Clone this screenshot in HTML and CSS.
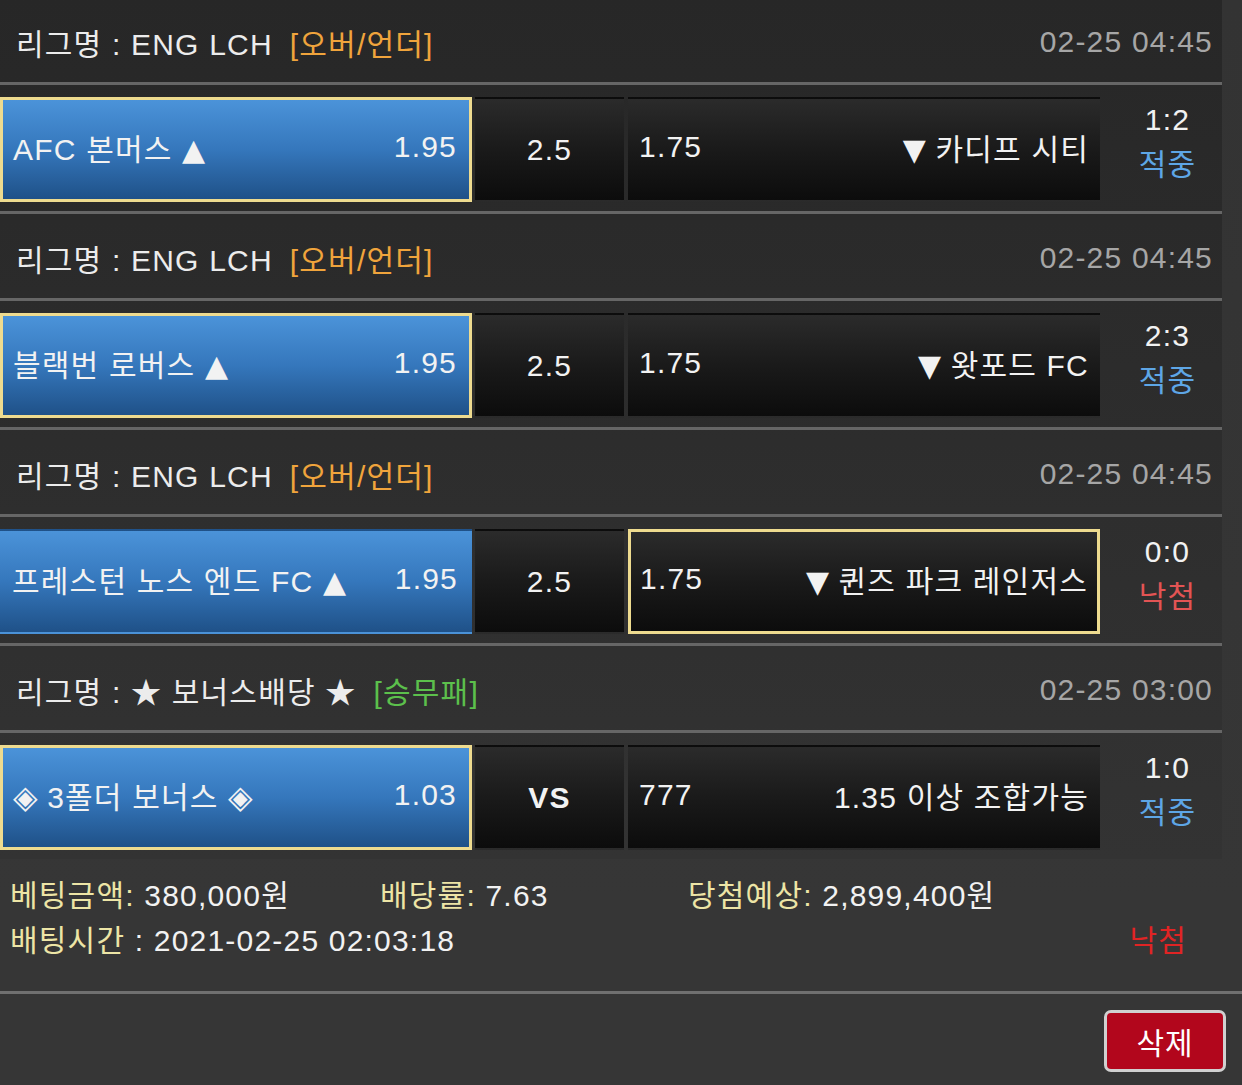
FILE: index.html
```html
<!DOCTYPE html>
<html lang="ko">
<head>
<meta charset="utf-8">
<link rel="stylesheet" href="styles.css">
</head>
<body>
<div class="page">
  <div class="list">
    <div class="block">
      <div class="league"><span class="lname">리그명 : ENG LCH</span><span class="type ou">[오버/언더]</span><span class="date">02-25 04:45</span></div>
      <div class="match">
        <div class="cell home sel"><span>AFC 본머스 <span class="tri">▲</span></span><span>1.95</span></div>
        <div class="cell mid">2.5</div>
        <div class="cell away"><span>1.75</span><span><span class="tri">▼</span> 카디프 시티</span></div>
        <div class="result"><span>1:2</span><span class="hit">적중</span></div>
      </div>
    </div>
    <div class="block">
      <div class="league"><span class="lname">리그명 : ENG LCH</span><span class="type ou">[오버/언더]</span><span class="date">02-25 04:45</span></div>
      <div class="match">
        <div class="cell home sel"><span>블랙번 로버스 <span class="tri">▲</span></span><span>1.95</span></div>
        <div class="cell mid">2.5</div>
        <div class="cell away"><span>1.75</span><span><span class="tri">▼</span> 왓포드 FC</span></div>
        <div class="result"><span>2:3</span><span class="hit">적중</span></div>
      </div>
    </div>
    <div class="block">
      <div class="league"><span class="lname">리그명 : ENG LCH</span><span class="type ou">[오버/언더]</span><span class="date">02-25 04:45</span></div>
      <div class="match">
        <div class="cell home"><span>프레스턴 노스 엔드 FC <span class="tri">▲</span></span><span>1.95</span></div>
        <div class="cell mid">2.5</div>
        <div class="cell away sel"><span>1.75</span><span><span class="tri">▼</span> 퀸즈 파크 레인저스</span></div>
        <div class="result"><span>0:0</span><span class="miss">낙첨</span></div>
      </div>
    </div>
    <div class="block last">
      <div class="league"><span class="lname">리그명 : ★ 보너스배당 ★</span><span class="type wdl">[승무패]</span><span class="date">02-25 03:00</span></div>
      <div class="match">
        <div class="cell home sel"><span><span class="dia">◈</span> 3폴더 보너스 <span class="dia">◈</span></span><span>1.03</span></div>
        <div class="cell mid vs">VS</div>
        <div class="cell away"><span>777</span><span>1.35 이상 조합가능</span></div>
        <div class="result"><span>1:0</span><span class="hit">적중</span></div>
      </div>
    </div>
  </div>
  <div class="summary">
    <div class="sumrow">
      <span class="c1"><span class="lbl">베팅금액:</span> 380,000원</span>
      <span class="c2"><span class="lbl">배당률:</span> 7.63</span>
      <span class="c3"><span class="lbl">당첨예상:</span> 2,899,400원</span>
    </div>
    <div class="sumrow">
      <span><span class="lbl">배팅시간</span> : 2021-02-25 02:03:18</span>
      <span class="status">낙첨</span>
    </div>
  </div>
  <div class="actions">
    <button class="del">삭제</button>
  </div>
</div>
</body>
</html>
```
FILE: styles.css
```css
html, body {
  margin: 0;
  padding: 0;
}
body {
  background: #363636;
  font-family: "Liberation Sans", "Noto Sans CJK KR", sans-serif;
  font-size: 30px;
  letter-spacing: 1.2px;
  color: #f2f2f2;
  width: 1242px;
  height: 1085px;
  overflow: hidden;
}
.page {
  display: flex;
  flex-direction: column;
  background: linear-gradient(#333 0px, #363636 900px);
}
.list {
  width: 1222px;
  margin-top: -2px;
  background: linear-gradient(#272727 0%, #2e2e2e 60%, #333 100%);
}
.block {
  border-bottom: 3px solid #666;
}
.block.last {
  border-bottom: none;
}
.league {
  height: 87px;
  box-sizing: border-box;
  padding: 3px 9px 0 16px;
  display: flex;
  align-items: center;
  border-bottom: 3px solid #666;
}
.lname {
  color: #ececec;
}
.type {
  margin-left: 17px;
}
.type.ou { color: #f0a43c; }
.type.wdl { color: #5cc04c; }
.date {
  margin-left: auto;
  color: #a6a6a6;
}
.match {
  display: flex;
  gap: 3px;
  padding: 12px 0 9px 0;
  height: 105px;
}
.cell {
  box-sizing: border-box;
  height: 105px;
  display: flex;
  align-items: center;
  background: linear-gradient(#2b2b2b, #1a1a1a 50%, #0c0c0c);
  border: 2px solid transparent;
}
.home {
  width: 472px;
  justify-content: space-between;
  padding: 0 12px 5px 10px;
  background: linear-gradient(#4b93d9, #3577bc 50%, #1f5188);
}
.mid {
  width: 149px;
  justify-content: center;
  padding-top: 1px;
}
.vs {
  font-weight: bold;
}
.away {
  width: 472px;
  justify-content: space-between;
  padding: 0 9px 5px 9px;
  margin-left: 1px;
}
.cell.sel {
  border: 3px solid #eedb8f;
}
.tri {
  font-family: "DejaVu Sans", sans-serif;
  font-size: 30px;
  line-height: 1;
  letter-spacing: 0;
}
.dia {
  font-family: "DejaVu Sans", sans-serif;
  font-size: 32px;
  line-height: 1;
  letter-spacing: 0;
}
.result {
  flex: 1;
  display: flex;
  flex-direction: column;
  align-items: center;
  justify-content: center;
  line-height: 45px;
  padding: 0 0 16px 10px;
}
.hit { color: #5ea6e6; }
.miss { color: #e35454; }
.summary {
  height: 135px;
  box-sizing: border-box;
  padding: 14px 55px 0 10px;
  border-bottom: 3px solid #707070;
  line-height: 45px;
}
.sumrow {
  display: flex;
}
.c1 { width: 370px; }
.c2 { width: 308px; }
.lbl { color: #ede5a6; }
.status {
  margin-left: auto;
  color: #e02424;
}
.actions {
  display: flex;
  justify-content: flex-end;
  padding: 16px 16px 0 0;
}
.del {
  width: 122px;
  height: 62px;
  background: #b2061c;
  border: 3px solid #d0d0d0;
  border-radius: 7px;
  color: #fff;
  font-family: "Liberation Sans", "Noto Sans CJK KR", sans-serif;
  font-size: 30px;
  letter-spacing: 1px;
  padding: 0;
}
```
